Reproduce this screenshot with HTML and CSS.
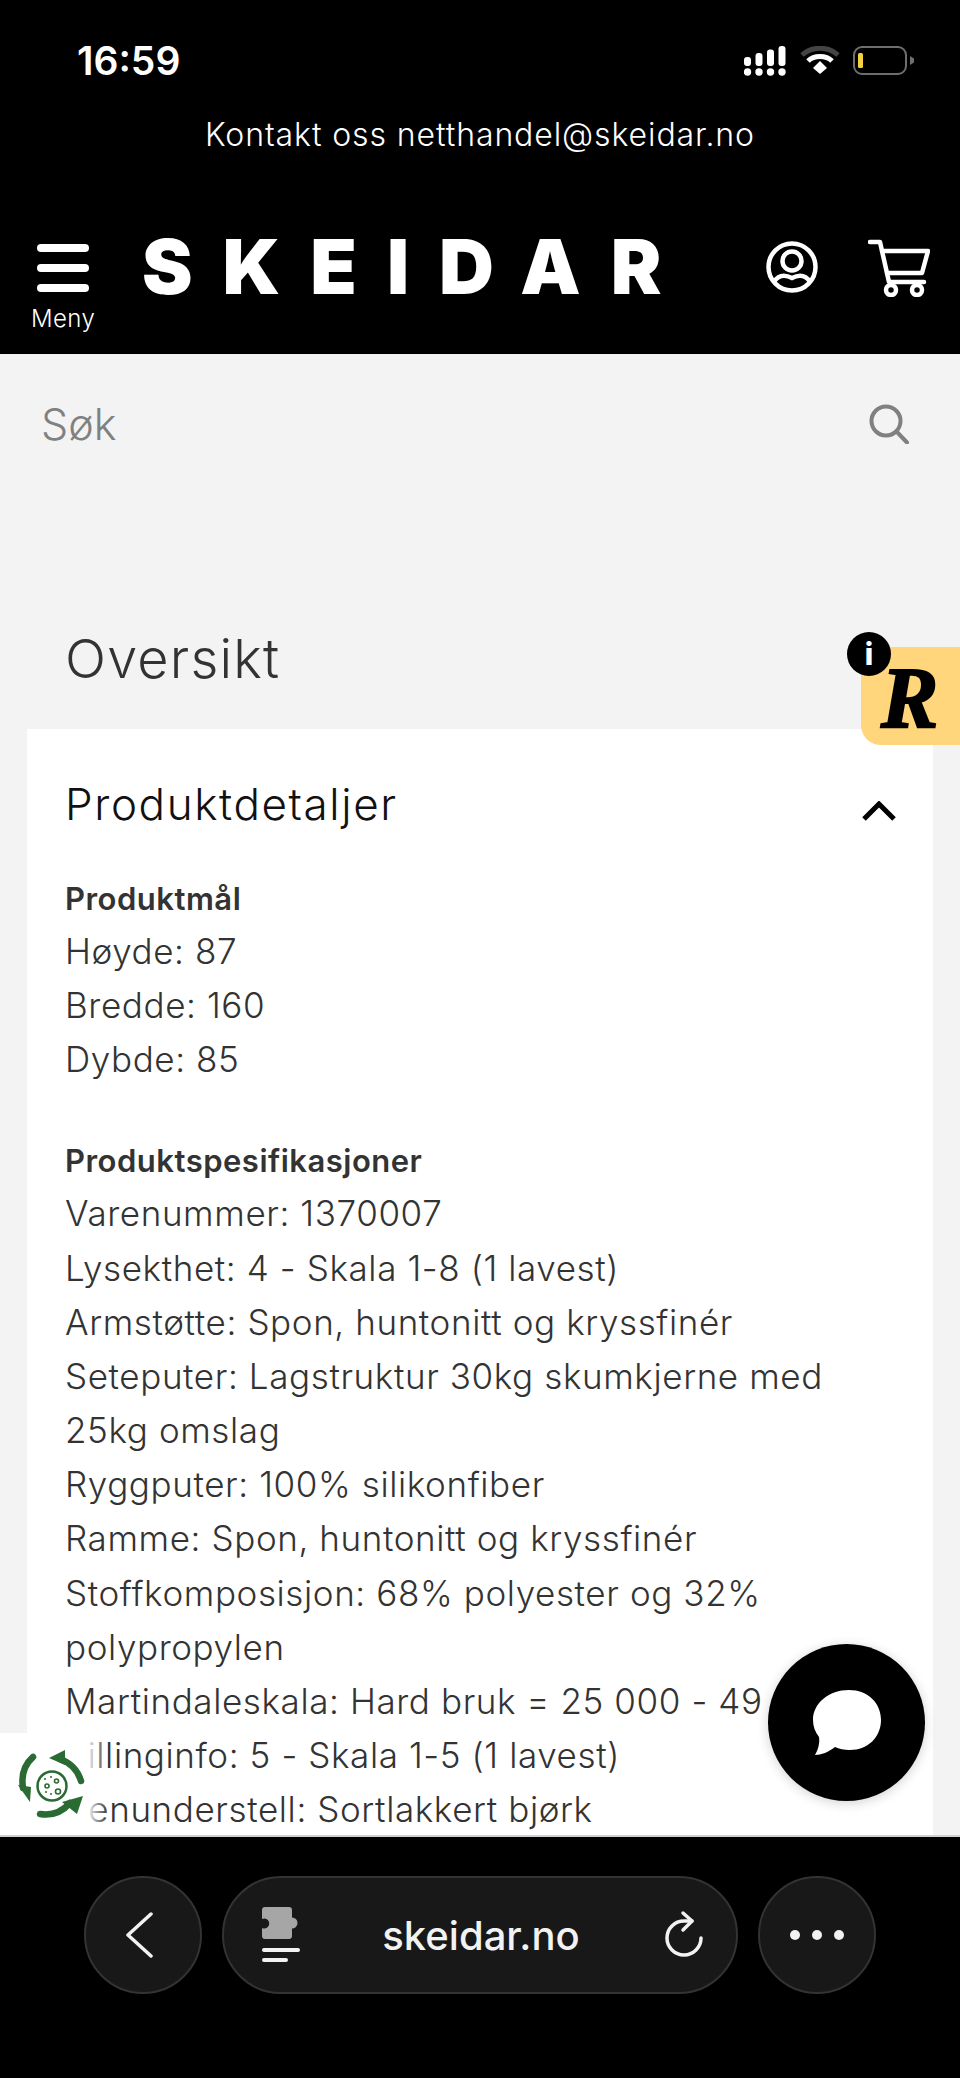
FILE: index.html
```html
<!DOCTYPE html>
<html lang="no">
<head>
  <meta charset="UTF-8" />
  <meta name="viewport" content="width=device-width, initial-scale=1.0"/>
  <title>Skeidar - Oversikt</title>
  <link rel="stylesheet" href="styles.css">
</head>
<body>
  <div class="page">
    <header class="site-header">
      <div class="status-bar">
        <span class="clock">16:59</span>
        <div class="status-icons">
          <svg class="signal" viewBox="0 0 42 30" width="42" height="30" fill="#fff">
            <rect x="0" y="11" width="7" height="9" rx="3"/>
            <rect x="11.500" y="7" width="7" height="13" rx="3"/>
            <rect x="23" y="3.500" width="7" height="16.500" rx="3"/>
            <rect x="34.500" y="0" width="7" height="20" rx="3"/>
            <circle cx="3.500" cy="26" r="3.700"/>
            <circle cx="15" cy="26" r="3.700"/>
            <circle cx="26.500" cy="26" r="3.700"/>
            <circle cx="38" cy="26" r="3.700"/>
          </svg>
          <svg class="wifi" viewBox="0 0 40 28" width="40" height="28" fill="none">
            <path d="M2 9 C12 0 28 0 38 9" stroke="#444" stroke-width="5"/>
            <path d="M8 15 C14 9 26 9 32 15" stroke="#fff" stroke-width="5"/>
            <path d="M13 22 L20 15 L27 22 L20 28 Z" fill="#fff"/>
          </svg>
          <svg class="battery" viewBox="0 0 62 29" width="62" height="29" fill="none">
            <rect x="1" y="1" width="52" height="27" rx="8" stroke="#6e6e6e" stroke-width="2"/>
            <rect x="5" y="7" width="5" height="15" rx="1.500" fill="#f4d33f"/>
            <path d="M57 10 L61 12.500 V16.500 L57 19 Z" fill="#6e6e6e"/>
          </svg>
        </div>
      </div>
      <div class="contact-line">Kontakt oss netthandel@skeidar.no</div>
      <div class="nav-row">
        <div class="menu-btn">
          <span class="bar"></span>
          <span class="bar"></span>
          <span class="bar"></span>
          <span class="menu-label">Meny</span>
        </div>
        <div class="logo">SKEIDAR</div>
        <div class="nav-icons">
          <svg viewBox="0 0 52 52" width="52" height="52" fill="none" stroke="#fff" stroke-width="4.500">
            <circle cx="26" cy="26" r="23.500"/>
            <circle cx="26" cy="20" r="9.500"/>
            <path d="M8 41 C13 33 20 34 26 37 C32 34 39 33 44 41"/>
          </svg>
          <svg class="cart" viewBox="0 0 62 58" width="62" height="58" fill="none" stroke="#fff" stroke-width="4.500" stroke-linejoin="round" stroke-linecap="round">
            <path d="M2 3 H12 L21 43 H56"/>
            <path d="M14 12 H60 L54 34 H19"/>
            <circle cx="23" cy="51" r="5"/>
            <circle cx="49" cy="51" r="5"/>
          </svg>
        </div>
      </div>
    </header>

    <main class="content">
      <div class="search-row">
        <span class="search-text">Søk</span>
        <svg viewBox="0 0 40 40" width="40" height="40" fill="none" stroke="#808080" stroke-width="4" stroke-linecap="round">
          <circle cx="17" cy="17" r="14.500"/>
          <path d="M27.500 27.500 L38 38.500"/>
        </svg>
      </div>

      <h1 class="page-title">Oversikt</h1>

      <section class="card">
        <div class="card-head">
          <h2>Produktdetaljer</h2>
          <svg viewBox="0 0 34 20" width="34" height="20" fill="none" stroke="#000" stroke-width="5">
            <path d="M2 18 L17 3 L32 18"/>
          </svg>
        </div>
        <div class="details">
          <div class="group">
            <b>Produktmål</b>
            <p>Høyde: 87</p>
            <p>Bredde: 160</p>
            <p>Dybde: 85</p>
          </div>
          <div class="group">
            <b>Produktspesifikasjoner</b>
            <p>Varenummer: 1370007</p>
            <p>Lysekthet: 4 - Skala 1-8 (1 lavest)</p>
            <p>Armstøtte: Spon, huntonitt og kryssfinér</p>
            <p>Seteputer: Lagstruktur 30kg skumkjerne med<br>25kg omslag</p>
            <p>Ryggputer: 100% silikonfiber</p>
            <p>Ramme: Spon, huntonitt og kryssfinér</p>
            <p>Stoffkomposisjon: 68% polyester og 32%<br>polypropylen</p>
            <p>Martindaleskala: Hard bruk = 25 000 - 49 999</p>
            <p>Pillinginfo: 5 - Skala 1-5 (1 lavest)</p>
            <p>Benunderstell: Sortlakkert bjørk</p>
          </div>
        </div>
      </section>

      <div class="eco-badge">
        <svg viewBox="0 0 68 70" width="68" height="70" fill="none">
          <g stroke="#2a6a33" stroke-width="6.500" stroke-linecap="round">
            <path d="M42 9 C53 13 60 21 63 31"/>
            <path d="M15 7 C6 15 3 25 5 38"/>
            <path d="M22 64 C34 66 44 62 52 53"/>
          </g>
          <g fill="#2a6a33">
            <path d="M31 8 L47 0 L47 15 Z"/>
            <path d="M0 35 L13 37 L12 52 Z"/>
            <path d="M44 52 L65 46 L59 64 Z"/>
          </g>
          <circle cx="34" cy="36" r="14.500" stroke="#2a6a33" stroke-width="2.500"/>
          <g stroke="#2a6a33" stroke-width="1.600">
            <circle cx="29" cy="36" r="2"/>
            <circle cx="38.500" cy="31" r="2"/>
            <circle cx="40" cy="41.500" r="2.500"/>
          </g>
          <g fill="#2a6a33">
            <circle cx="33" cy="27" r="1"/>
            <circle cx="27" cy="29" r="1"/>
            <circle cx="33" cy="44" r="1"/>
            <circle cx="28" cy="42" r="1"/>
          </g>
        </svg>
      </div>

      <div class="review-tab">
        <span class="review-r">R</span>
        <span class="info-dot">i</span>
      </div>

      <div class="chat-btn">
        <svg viewBox="0 0 70 66" width="70" height="66" fill="#fff">
          <path d="M37 0 C56 0 69 13 69 30 C69 47 56 60 38 60 C32 60 27 59 23 57 C17 62 9 65 3 65 C6 60 8 53 7 47 C3 42 1 36 1 30 C1 13 17 0 37 0 Z"/>
        </svg>
      </div>
    </main>

    <footer class="browser-bar">
      <div class="round-btn">
        <svg class="back" viewBox="0 0 28 46" width="28" height="46" fill="none" stroke="#f2f2f2" stroke-width="3.500" stroke-linecap="round" stroke-linejoin="round">
          <path d="M26 2 L3 23 L26 44"/>
        </svg>
      </div>
      <div class="url-pill">
        <svg class="ext-icon" viewBox="0 0 40 56" width="40" height="56">
          <path d="M3 0 H27 A3 3 0 0 1 30 3 V10.500 A5.500 5.500 0 1 1 30 21.500 V29 A3 3 0 0 1 27 32 H3 A3 3 0 0 1 0 29 V21 A5 5 0 1 0 0 12 V3 A3 3 0 0 1 3 0 Z" fill="#a6a6a6"/>
          <rect x="0" y="41" width="38" height="4" rx="2" fill="#f2f2f2"/>
          <rect x="0" y="51" width="26" height="4" rx="2" fill="#f2f2f2"/>
        </svg>
        <span class="url-text">skeidar.no</span>
        <svg class="reload" viewBox="0 0 46 52" width="46" height="52" fill="none" stroke="#f2f2f2" stroke-width="3.500" stroke-linecap="round" stroke-linejoin="round">
          <path d="M41 29 A17 17 0 1 1 24 12 H32"/>
          <path d="M23 4 L32 12 L23 21"/>
        </svg>
      </div>
      <div class="round-btn">
        <span class="dot"></span>
        <span class="dot"></span>
        <span class="dot"></span>
      </div>
    </footer>
  </div>
</body>
</html>
```

FILE: styles.css
```css
* {
  box-sizing: border-box;
}

body {
  margin: 0;
  font-family: "Inter", Arial, sans-serif;
  font-weight: 300;
  background: #000;
}

.page {
  position: relative;
  width: 960px;
  height: 2078px;
  display: flex;
  flex-direction: column;
  overflow: hidden;
}

/* header */
.site-header {
  height: 354px;
  background: #000;
  color: white;
  flex-shrink: 0;
}

.status-bar {
  display: flex;
  justify-content: space-between;
  align-items: flex-start;
  height: 106px;
  padding: 39px 45px 0 77px;
}

.clock {
  font-weight: 600;
  font-size: 39px;
  line-height: 44px;
}

.status-icons {
  display: flex;
  align-items: flex-start;
  gap: 14px;
  padding-top: 7px;
}

.wifi {
  margin-right: -1px;
}

.contact-line {
  text-align: center;
  font-size: 32px;
  line-height: 58px;
  height: 124px;
  letter-spacing: 0.9px;
}

.nav-row {
  display: flex;
  align-items: flex-start;
}

.menu-btn {
  width: 142px;
  padding-left: 37px;
  padding-top: 14px;
  flex-shrink: 0;
}

.bar {
  display: block;
  width: 52px;
  height: 8px;
  background: white;
  border-radius: 4px;
  margin-bottom: 12px;
}

.menu-label {
  display: block;
  margin-left: -6px;
  margin-top: 1px;
  font-size: 24px;
  line-height: 30px;
  letter-spacing: 0.4px;
}

.logo {
  font-weight: 900;
  font-size: 76px;
  line-height: 76px;
  letter-spacing: 30px;
  width: 640px;
  margin-top: -2px;
  white-space: nowrap;
}

.nav-icons {
  display: flex;
  gap: 50px;
  align-items: flex-start;
  margin-top: 11px;
  margin-left: -16px;
}

.cart {
  margin-top: -2px;
}

/* main area */
.content {
  position: relative;
  flex: 1;
  min-height: 0;
  background: #f3f3f3;
  overflow: hidden;
  border-bottom: 2px solid #d0d0d0;
}

.search-row {
  display: flex;
  justify-content: space-between;
  align-items: center;
  height: 140px;
  padding: 0 51px 0 41px;
}

.search-text {
  font-size: 43px;
  color: #808080;
}

.page-title {
  margin: 0;
  padding: 134px 0 0 65px;
  height: 235px;
  font-size: 54px;
  line-height: 62px;
  font-weight: 300;
  color: #333;
  letter-spacing: 1.2px;
}

.card {
  background: white;
  margin: 0 27px;
  padding: 0 37px 0 38px;
  height: 1200px;
}

.card-head {
  display: flex;
  justify-content: space-between;
  align-items: center;
  height: 145px;
  padding-top: 5px;
}

.card-head h2 {
  margin: 0;
  font-size: 44px;
  font-weight: 300;
  color: #111;
  letter-spacing: 1.6px;
}

.card-head svg {
  margin-top: 14px;
}

.details {
  font-size: 35px;
  line-height: 54.150px;
  letter-spacing: 0.6px;
  color: #333;
  white-space: nowrap;
}

.group {
  margin-bottom: 50px;
}

.group b {
  display: block;
  font-size: 31px;
  line-height: 50px;
  font-weight: 600;
  letter-spacing: 0.5px;
}

.group p {
  margin: 0;
}

/* things sitting over the page */
.eco-badge {
  position: absolute;
  left: 0;
  top: 1379px;
  width: 108px;
  height: 104px;
  padding: 17px 0 0 18px;
  background: linear-gradient(to right, white 80%, rgba(255, 255, 255, 0));
}

.review-tab {
  position: absolute;
  right: 0;
  top: 293px;
  width: 99px;
  height: 98px;
  background: #ffd67c;
  border-bottom-left-radius: 20px;
}

.review-r {
  position: absolute;
  left: 20px;
  top: 8px;
  font-family: "Liberation Serif", serif;
  font-style: italic;
  font-weight: 700;
  font-size: 86px;
  line-height: 86px;
  color: #000;
  -webkit-text-stroke: 2px #000;
}

.info-dot {
  position: absolute;
  left: -14px;
  top: -15px;
  width: 44px;
  height: 44px;
  border-radius: 50%;
  background: #000;
  color: white;
  font-weight: 800;
  font-size: 30px;
  line-height: 44px;
  text-align: center;
}

.chat-btn {
  position: absolute;
  left: 768px;
  top: 1290px;
  width: 157px;
  height: 157px;
  border-radius: 50%;
  background: #000;
  box-shadow: 0 2px 12px rgba(0, 0, 0, 0.18);
  display: flex;
  align-items: center;
  justify-content: center;
}

/* browser toolbar */
.browser-bar {
  height: 241px;
  flex-shrink: 0;
  background: #000;
  display: flex;
  align-items: flex-start;
  gap: 20px;
  padding: 39px 0 0 84px;
}

.round-btn {
  width: 118px;
  height: 118px;
  border-radius: 50%;
  background: #181818;
  border: 2px solid #333;
  display: flex;
  align-items: center;
  justify-content: center;
  gap: 8px;
}

.back {
  margin-left: -8px;
}

.dot {
  width: 10px;
  height: 10px;
  border-radius: 50%;
  background: #f2f2f2;
  margin: 0 2px;
}

.url-pill {
  width: 516px;
  height: 118px;
  border-radius: 59px;
  background: #181818;
  border: 2px solid #333;
  display: flex;
  align-items: center;
  padding: 0 30px 0 38px;
}

.url-text {
  flex: 1;
  text-align: center;
  font-weight: 500;
  font-size: 40px;
  color: #f2f2f2;
}
```
